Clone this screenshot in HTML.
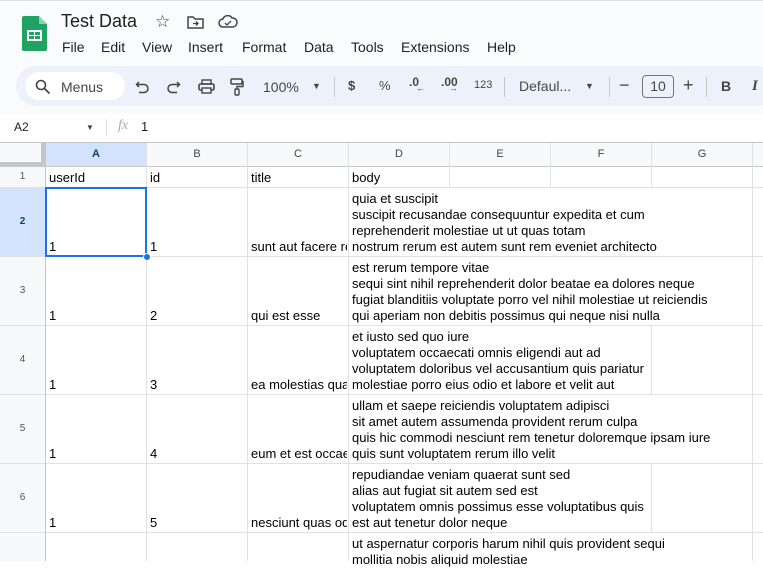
<!DOCTYPE html>
<html><head><meta charset="utf-8"><style>
*{box-sizing:border-box;margin:0;padding:0}
body{width:763px;height:561px;overflow:hidden;background:#fff;font-family:"Liberation Sans",Arial,sans-serif;position:relative;color:#1f1f1f}
.a{position:absolute}
.top{left:0;top:0;width:763px;height:114px;background:#f9fbfd;border-top:1px solid #e0e0e0}
.mn{position:absolute;top:39px;font-size:14px;color:#1f1f1f}
.tb{left:16px;top:66px;width:760px;height:40px;background:#edf2fa;border-radius:20px}
.ic{font-size:13px;color:#444746}
.cell{position:absolute;font-size:13px;line-height:16px;white-space:nowrap;overflow:hidden;color:#000}
.hl{position:absolute;background:#e1e1e1;height:1px}
.vl{position:absolute;background:#e1e1e1;width:1px}
.ch{position:absolute;top:143px;height:23px;font-size:11px;color:#444;text-align:center;line-height:23px}
.rh{position:absolute;left:0;width:45px;font-size:10px;color:#555;text-align:center}
</style></head><body>
<div class="a top"></div>
<svg class="a" style="left:22px;top:16px" width="25" height="35" viewBox="0 0 25 35"><path d="M2 0h15l8 8v25a2 2 0 0 1-2 2H2a2 2 0 0 1-2-2V2a2 2 0 0 1 2-2z" fill="#1ea362"/><path d="M17 0v8h8z" fill="#8ed1b1"/><rect x="5" y="14" width="15" height="11" fill="#fff"/><rect x="7" y="16" width="5" height="3" fill="#1ea362"/><rect x="13" y="16" width="5" height="3" fill="#1ea362"/><rect x="7" y="20" width="5" height="3" fill="#1ea362"/><rect x="13" y="20" width="5" height="3" fill="#1ea362"/></svg>
<div class="a" style="left:61px;top:11px;font-size:18px;color:#1f1f1f">Test Data</div>
<div class="a" style="left:155px;top:12px;font-size:17px;color:#444">☆</div>
<svg class="a" style="left:187px;top:15px" width="18" height="14"><path d="M1 2h5l2 2h8v9H1z" fill="none" stroke="#444" stroke-width="1.5"/><path d="M6 8.5h5M9 6.5l2 2-2 2" fill="none" stroke="#444" stroke-width="1.3"/></svg>
<svg class="a" style="left:218px;top:15px" width="20" height="14"><path d="M5 12a4 4 0 0 1 0-8 5 5 0 0 1 9-1 4 4 0 0 1 1 9z" fill="none" stroke="#444" stroke-width="1.5"/><path d="M7 8l2 2 4-4" fill="none" stroke="#444" stroke-width="1.3"/></svg>
<div class="mn" style="left:62px">File</div><div class="mn" style="left:101px">Edit</div><div class="mn" style="left:142px">View</div><div class="mn" style="left:188px">Insert</div><div class="mn" style="left:242px">Format</div><div class="mn" style="left:304px">Data</div><div class="mn" style="left:351px">Tools</div><div class="mn" style="left:401px">Extensions</div><div class="mn" style="left:487px">Help</div>
<div class="a tb"></div>
<div class="a" style="left:25px;top:72px;width:100px;height:28px;background:#fff;border-radius:14px"></div>
<svg class="a" style="left:35px;top:79px" width="16" height="16"><circle cx="6" cy="6" r="4.5" fill="none" stroke="#444" stroke-width="1.6"/><path d="M9.5 9.5l5 5" stroke="#444" stroke-width="1.8"/></svg>
<div class="a ic" style="left:61px;top:79px;font-size:14px">Menus</div>
<svg class="a" style="left:135px;top:80px" width="15" height="14"><path d="M4 2L1.5 4.5 4 7" fill="none" stroke="#444" stroke-width="1.5"/><path d="M2 4.5h7a4 4 0 0 1 0 8H4" fill="none" stroke="#444" stroke-width="1.5"/></svg>
<svg class="a" style="left:166px;top:80px" width="15" height="14"><path d="M11 2l2.5 2.5L11 7" fill="none" stroke="#444" stroke-width="1.5"/><path d="M13 4.5H6a4 4 0 0 0 0 8h5" fill="none" stroke="#444" stroke-width="1.5"/></svg>
<svg class="a" style="left:198px;top:79px" width="17" height="15"><rect x="1" y="5" width="15" height="6" rx="1.5" fill="none" stroke="#444" stroke-width="1.6"/><rect x="4" y="1" width="9" height="4" fill="none" stroke="#444" stroke-width="1.4"/><rect x="4" y="9" width="9" height="5" fill="#edf2fa" stroke="#444" stroke-width="1.4"/></svg>
<svg class="a" style="left:230px;top:78px" width="14" height="18"><rect x="1" y="1" width="11" height="5" rx="1" fill="none" stroke="#444" stroke-width="1.5"/><path d="M12 3.5h1v5H7v3" fill="none" stroke="#444" stroke-width="1.4"/><rect x="5" y="11" width="4" height="6" rx="1" fill="none" stroke="#444" stroke-width="1.4"/></svg>
<div class="a ic" style="left:263px;top:79px;font-size:14px">100%</div>
<div class="a ic" style="left:312px;top:81px;font-size:9px">▼</div>
<div class="a" style="left:334px;top:77px;width:1px;height:20px;background:#c7c7c7"></div>
<div class="a ic" style="left:348px;top:78px;font-size:13px;font-weight:bold">$</div>
<div class="a ic" style="left:379px;top:78px;font-size:13px">%</div>
<div class="a ic" style="left:409px;top:75px;font-size:12px;font-weight:bold">.0<span style="font-size:9px;position:relative;top:5px;left:-3px">←</span></div>
<div class="a ic" style="left:441px;top:75px;font-size:12px;font-weight:bold">.00<span style="font-size:9px;position:relative;top:5px;left:-9px">→</span></div>
<div class="a ic" style="left:474px;top:79px;font-size:11px">123</div>
<div class="a" style="left:504px;top:77px;width:1px;height:20px;background:#c7c7c7"></div>
<div class="a ic" style="left:519px;top:78px;font-size:14px">Defaul...</div>
<div class="a ic" style="left:585px;top:81px;font-size:9px">▼</div>
<div class="a" style="left:609px;top:77px;width:1px;height:20px;background:#c7c7c7"></div>
<div class="a ic" style="left:619px;top:75px;font-size:18px">−</div>
<div class="a" style="left:642px;top:75px;width:32px;height:23px;border:1px solid #747775;border-radius:4px;font-size:14px;text-align:center;line-height:21px;color:#444">10</div>
<div class="a ic" style="left:683px;top:75px;font-size:18px">+</div>
<div class="a" style="left:706px;top:77px;width:1px;height:20px;background:#c7c7c7"></div>
<div class="a ic" style="left:721px;top:78px;font-size:14px;font-weight:bold">B</div>
<div class="a ic" style="left:752px;top:78px;font-size:15px;font-style:italic;font-family:'Liberation Serif',serif;font-weight:bold">I</div>
<div class="a" style="left:14px;top:120px;font-size:12px">A2</div>
<div class="a" style="left:86px;top:123px;font-size:8px;color:#444">▼</div>
<div class="a" style="left:106px;top:119px;width:1px;height:17px;background:#e0e0e0"></div>
<div class="a" style="left:118px;top:118px;font-size:14px;font-style:italic;font-family:'Liberation Serif',serif;color:#aaa">fx</div>
<div class="a" style="left:141px;top:119px;font-size:13px">1</div>
<div class="a" style="left:0;top:142px;width:763px;height:1px;background:#c4c7c5"></div>
<div class="a" style="left:0;top:143px;width:763px;height:23px;background:#f8f9fa"></div>
<div class="a" style="left:0;top:143px;width:45px;height:418px;background:#f8f9fa"></div>
<div class="a" style="left:0;top:143px;width:45px;height:23px;border-right:4px solid #c4c7c5;border-bottom:4px solid #c4c7c5;background:#f8f9fa"></div>
<div class="a" style="left:46px;top:143px;width:100px;height:23px;background:#d3e3fd"></div>
<div class="a" style="left:0;top:188px;width:45px;height:68px;background:#d3e3fd"></div>
<div class="ch" style="left:46px;width:100px;font-weight:bold;color:#1f3a70">A</div>
<div class="ch" style="left:147px;width:100px">B</div>
<div class="ch" style="left:248px;width:100px">C</div>
<div class="ch" style="left:349px;width:100px">D</div>
<div class="ch" style="left:450px;width:100px">E</div>
<div class="ch" style="left:551px;width:100px">F</div>
<div class="ch" style="left:652px;width:100px">G</div>
<div class="rh" style="top:171px">1</div>
<div class="rh" style="top:216px;font-weight:bold;color:#1f3a70">2</div>
<div class="rh" style="top:285px">3</div>
<div class="rh" style="top:354px">4</div>
<div class="rh" style="top:423px">5</div>
<div class="rh" style="top:492px">6</div>
<div class="hl" style="left:0;top:166px;width:763px;background:#c4c7c5"></div>
<div class="hl" style="left:0;top:187px;width:763px"></div>
<div class="hl" style="left:0;top:256px;width:763px"></div>
<div class="hl" style="left:0;top:325px;width:763px"></div>
<div class="hl" style="left:0;top:394px;width:763px"></div>
<div class="hl" style="left:0;top:463px;width:763px"></div>
<div class="hl" style="left:0;top:532px;width:763px"></div>
<div class="vl" style="left:45px;top:143px;height:418px;background:#c4c7c5"></div>
<div class="vl" style="left:146px;top:143px;height:418px"></div>
<div class="vl" style="left:247px;top:143px;height:418px"></div>
<div class="vl" style="left:348px;top:143px;height:418px"></div>
<div class="vl" style="left:449px;top:143px;height:44px"></div>
<div class="vl" style="left:550px;top:143px;height:44px"></div>
<div class="vl" style="left:651px;top:143px;height:44px"></div>
<div class="vl" style="left:651px;top:325px;height:69px"></div>
<div class="vl" style="left:651px;top:463px;height:69px"></div>
<div class="vl" style="left:752px;top:143px;height:418px"></div>
<div class="cell" style="left:49px;top:170px">userId</div>
<div class="cell" style="left:150px;top:170px">id</div>
<div class="cell" style="left:251px;top:170px">title</div>
<div class="cell" style="left:352px;top:170px">body</div>
<div class="cell" style="left:49px;top:239px">1</div><div class="cell" style="left:150px;top:239px">1</div>
<div class="cell" style="left:251px;top:239px;width:96px">sunt aut facere repellat</div>
<div class="cell" style="left:352px;top:191px">quia et suscipit<br>suscipit recusandae consequuntur expedita et cum<br>reprehenderit molestiae ut ut quas totam<br>nostrum rerum est autem sunt rem eveniet architecto</div>
<div class="cell" style="left:49px;top:308px">1</div><div class="cell" style="left:150px;top:308px">2</div>
<div class="cell" style="left:251px;top:308px;width:96px">qui est esse</div>
<div class="cell" style="left:352px;top:260px">est rerum tempore vitae<br>sequi sint nihil reprehenderit dolor beatae ea dolores neque<br>fugiat blanditiis voluptate porro vel nihil molestiae ut reiciendis<br>qui aperiam non debitis possimus qui neque nisi nulla</div>
<div class="cell" style="left:49px;top:377px">1</div><div class="cell" style="left:150px;top:377px">3</div>
<div class="cell" style="left:251px;top:377px;width:96px">ea molestias quasi</div>
<div class="cell" style="left:352px;top:329px;width:298px">et iusto sed quo iure<br>voluptatem occaecati omnis eligendi aut ad<br>voluptatem doloribus vel accusantium quis pariatur<br>molestiae porro eius odio et labore et velit aut</div>
<div class="cell" style="left:49px;top:446px">1</div><div class="cell" style="left:150px;top:446px">4</div>
<div class="cell" style="left:251px;top:446px;width:96px">eum et est occaecati</div>
<div class="cell" style="left:352px;top:398px">ullam et saepe reiciendis voluptatem adipisci<br>sit amet autem assumenda provident rerum culpa<br>quis hic commodi nesciunt rem tenetur doloremque ipsam iure<br>quis sunt voluptatem rerum illo velit</div>
<div class="cell" style="left:49px;top:515px">1</div><div class="cell" style="left:150px;top:515px">5</div>
<div class="cell" style="left:251px;top:515px;width:96px">nesciunt quas odio</div>
<div class="cell" style="left:352px;top:467px;width:298px">repudiandae veniam quaerat sunt sed<br>alias aut fugiat sit autem sed est<br>voluptatem omnis possimus esse voluptatibus quis<br>est aut tenetur dolor neque</div>
<div class="cell" style="left:352px;top:536px">ut aspernatur corporis harum nihil quis provident sequi<br>mollitia nobis aliquid molestiae</div>
<div class="a" style="left:45px;top:187px;width:102px;height:70px;border:2px solid #1a73e8"></div>
<div class="a" style="left:143px;top:253px;width:8px;height:8px;border-radius:50%;background:#1a73e8;border:1px solid #fff"></div>
</body></html>
